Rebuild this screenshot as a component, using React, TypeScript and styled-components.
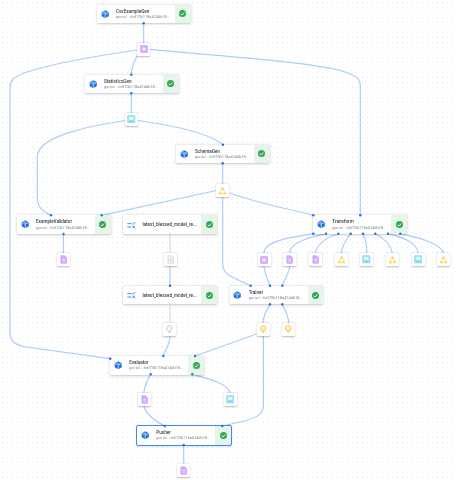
import styled, { createGlobalStyle } from 'styled-components';

const GlobalStyle = createGlobalStyle`
	html, body {
		margin: 0;
		padding: 0;
		background: #fff;
		font-family: Roboto, "Liberation Sans", sans-serif;
	}
`;

const DIGEST = 'gcr.io/...fcff70b118a414db18...';

type NodeData = { name: string; x: number; y: number; sub?: boolean; kind?: 'exec' | 'resolver'; selected?: boolean };

const NODES: NodeData[] = [
	{ name: 'CsvExampleGen', x: 97, y: 4.7, sub: true },
	{ name: 'StatisticsGen', x: 85, y: 74.7, sub: true },
	{ name: 'SchemaGen', x: 176, y: 144.7, sub: true },
	{ name: 'ExampleValidator', x: 17, y: 215.3, sub: true },
	{ name: 'latest_blessed_model_re...', x: 123.4, y: 215.3, kind: 'resolver' },
	{ name: 'Transform', x: 313.3, y: 215.3, sub: true },
	{ name: 'latest_blessed_model_re...', x: 123.4, y: 285.8, kind: 'resolver' },
	{ name: 'Trainer', x: 229.7, y: 285.8, sub: true },
	{ name: 'Evaluator', x: 110.3, y: 356, sub: true },
	{ name: 'Pusher', x: 137.3, y: 426, sub: true, selected: true },
];

type ArtifactKind = 'examples' | 'stats' | 'schema' | 'file' | 'blank' | 'bulb' | 'bulbGrey';

const ARTIFACTS: { kind: ArtifactKind; x: number; y: number }[] = [
	{ kind: 'examples', x: 143.7, y: 49 },
	{ kind: 'stats', x: 131.3, y: 119 },
	{ kind: 'schema', x: 222.7, y: 190 },
	{ kind: 'file', x: 63.5, y: 259.5 },
	{ kind: 'blank', x: 170, y: 259.5 },
	{ kind: 'examples', x: 264, y: 259.5 },
	{ kind: 'file', x: 289.7, y: 259.5 },
	{ kind: 'file', x: 315.3, y: 259.5 },
	{ kind: 'schema', x: 341, y: 259.5 },
	{ kind: 'stats', x: 366.7, y: 259.5 },
	{ kind: 'schema', x: 392.3, y: 259.5 },
	{ kind: 'stats', x: 418, y: 259.5 },
	{ kind: 'schema', x: 443.7, y: 259.5 },
	{ kind: 'bulbGrey', x: 169.7, y: 329.7 },
	{ kind: 'bulb', x: 263, y: 329.7 },
	{ kind: 'bulb', x: 288.7, y: 329.7 },
	{ kind: 'file', x: 144, y: 399.5 },
	{ kind: 'stats', x: 230, y: 399.5 },
	{ kind: 'file', x: 183.7, y: 470 },
];

const EDGES = [
	'M143.7 23 V43',
	'M138 54 C135 60 131.3 66 131.3 74.7',
	'M138 50 C100 55 50 64 24 73 C14 77 10 80 10 88 V332 C10 342 16 345 26 347 L110.3 358.7',
	'M150 49.3 C230 57 330 63 350 74 C358 77 360.3 80 360.3 86 V215.3',
	'M131.3 93.3 V113',
	'M125 120.5 C90 126 37.3 136 37.3 157 V198 C37.3 208 44 212 51 215.3',
	'M138 120.5 C170 125 210 133 223 145',
	'M222.7 163.3 V184',
	'M216.5 190.5 L101.7 215.3',
	'M229.7 193 C260 204 285 208 313.3 215.3',
	'M222.7 196 V262 C222.7 271 226 274 232 277 L250.7 285.8',
	'M63.5 234 V253',
	'M170 266 V285.8',
	'M313.3 233.7 C285 238 264 242 264 253',
	'M326 233.7 C305 238 289.7 244 289.7 253',
	'M338.3 233.7 C325 238 317 245 315.3 253',
	'M350.7 233.7 C346 239 343 245 341 253',
	'M363 233.7 C366 239 366.7 245 366.7 253',
	'M375.3 233.7 C384 238 391 245 392.3 253',
	'M388 233.7 C405 238 417 243 418 253',
	'M400.3 233.7 C420 238 440 243 443.7 253',
	'M264 266 C264.5 274 268 280 270 285.8',
	'M289.7 266 C289 274 284 280 282.3 285.8',
	'M270 304.3 C266 310 263.5 316 263 323',
	'M282.3 304.3 C285 310 288.5 316 288.7 323',
	'M256.7 334 L195 356',
	'M263.4 336 V405 C263.4 414 258 417 245 421 L222.3 426',
	'M170 336 C170 345 165 350 163.3 356',
	'M150.7 374.3 C147 381 144 386 144 393',
	'M192.3 374.3 C210 379 228 384 230 393',
	'M144 406 C146 415 155 421 164.7 426',
	'M183.7 445 V463.5',
];

const GREY_EDGES = ['M170 234 V253', 'M170 304.3 V323'];

const PORTS: [number, number][] = [
	[143.7, 23.2], [131.3, 74.7], [131.3, 93.3], [223, 144.8], [222.7, 163.3],
	[51, 215.3], [101.7, 215.3], [63.5, 234], [170, 285.8], [313.3, 215.3], [360.3, 215.3],
	[313.3, 233.7], [326, 233.7], [338.3, 233.7], [350.7, 233.7], [363, 233.7], [375.3, 233.7], [388, 233.7], [400.3, 233.7],
	[250.7, 285.8], [270, 285.8], [282.3, 285.8], [270, 304.3], [282.3, 304.3],
	[110.3, 358.7], [163.3, 356], [195, 356], [150.7, 374.3], [192.3, 374.3],
	[164.7, 426], [222.3, 426], [183.7, 445],
];

const GREY_PORTS: [number, number][] = [[170, 234], [170, 304.3]];

function ExecutorIcon() {
	return (
		<svg width="8.5" height="8.5" viewBox="0 0 24 24">
			<path d="M12 1 L22 6.5 V17.5 L12 23 L2 17.5 V6.5 Z" fill="#1a73e8" />
			<path d="M3 7 L12 12 L21 7 M12 12 V23 M7.5 4.5 L16.5 9.5" stroke="#fff" strokeWidth="1.8" fill="none" />
		</svg>
	);
}

function ResolverIcon() {
	return (
		<svg width="9" height="8" viewBox="0 0 27 24" fill="none" stroke="#1a73e8" strokeWidth="2.4">
			<path d="M1 8 H13 M1 18 H13" />
			<path d="M15 7 L18.5 10.5 L25 3" />
			<path d="M16 14 L24 22 M24 14 L16 22" />
		</svg>
	);
}

function CheckIcon() {
	return (
		<svg width="7" height="7" viewBox="0 0 24 24">
			<circle cx="12" cy="12" r="12" fill="#34a853" />
			<path d="M6 12.5 L10.5 17 L18.5 8.5" stroke="#fff" strokeWidth="3" fill="none" />
		</svg>
	);
}

function ArtifactIcon({ kind }: { kind: ArtifactKind }) {
	switch (kind) {
		case 'examples':
			return (
				<svg width="8" height="8" viewBox="0 0 24 24">
					<rect x="1.5" y="1.5" width="21" height="21" rx="2" fill="#d7aefb" stroke="#c58af9" strokeWidth="1.5" />
					<circle cx="12" cy="12" r="5.5" fill="#f3e8fd" />
				</svg>
			);
		case 'stats':
			return (
				<svg width="8.5" height="8.5" viewBox="0 0 24 24">
					<rect x="1.5" y="1.5" width="21" height="21" rx="2" fill="#a1e4f2" stroke="#78d9ec" strokeWidth="1.5" />
					<rect x="6" y="6" width="12" height="8" fill="#e4f7fb" />
					<path d="M6 18 H18" stroke="#4ecde6" strokeWidth="2" />
				</svg>
			);
		case 'schema':
			return (
				<svg width="9" height="9" viewBox="0 0 24 24" fill="#fdd663">
					<path d="M12 1.5 L17.5 11.5 H6.5 Z" />
					<path d="M6.5 12.5 L12 22 H1 Z" />
					<path d="M17.5 12.5 L23 22 H12 Z" />
				</svg>
			);
		case 'file':
			return (
				<svg width="9" height="9" viewBox="0 0 24 24">
					<path d="M5 2 H15 L20 7 V22 H5 Z" fill="#d7aefb" stroke="#c58af9" strokeWidth="1.5" />
					<path d="M9 12 H16 M9 16.5 H16" stroke="#f3e8fd" strokeWidth="2" />
				</svg>
			);
		case 'blank':
			return (
				<svg width="9" height="9" viewBox="0 0 24 24">
					<path d="M5 2 H15 L20 7 V22 H5 Z" fill="#f1f3f4" stroke="#c4c7ca" strokeWidth="1.5" />
					<path d="M9 12 H16 M9 16.5 H16" stroke="#c4c7ca" strokeWidth="1.6" />
				</svg>
			);
		default: {
			const fill = kind === 'bulb' ? '#fef1c4' : '#f8f9fa';
			const line = kind === 'bulb' ? '#fbbc04' : '#bdc1c6';
			return (
				<svg width="8.5" height="8.5" viewBox="0 0 24 24">
					<path d="M12 2 C7 2 4.5 5.5 4.5 9 C4.5 13 8 15 9 18 H15 C16 15 19.5 13 19.5 9 C19.5 5.5 17 2 12 2 Z" fill={fill} stroke={line} strokeWidth="2.4" />
					<path d="M10 21.5 H14" stroke={line} strokeWidth="2" />
				</svg>
			);
		}
	}
}

export default function App() {
	return (
		<Canvas>
			<GlobalStyle />
			<EdgeLayer viewBox="0 0 456 480">
				{EDGES.map((d, i) => (
					<path key={i} d={d} stroke="#aecbfa" />
				))}
				{GREY_EDGES.map((d, i) => (
					<path key={i} d={d} stroke="#d9dbde" />
				))}
			</EdgeLayer>
			{ARTIFACTS.map((a, i) => (
				<ArtifactBox key={i} $x={a.x} $y={a.y}>
					<ArtifactIcon kind={a.kind} />
				</ArtifactBox>
			))}
			{NODES.map((n, i) => (
				<NodeCard key={i} $x={n.x} $y={n.y} $selected={n.selected}>
					<IconSlot>{n.kind === 'resolver' ? <ResolverIcon /> : <ExecutorIcon />}</IconSlot>
					<Labels>
						<NodeName>{n.name}</NodeName>
						{n.sub && <NodeDigest>{DIGEST}</NodeDigest>}
					</Labels>
					<StatusCell>
						<CheckIcon />
					</StatusCell>
				</NodeCard>
			))}
			<PortLayer viewBox="0 0 456 480">
				{PORTS.map(([cx, cy], i) => (
					<circle key={i} cx={cx} cy={cy} r="1.2" fill="#1a73e8" />
				))}
				{GREY_PORTS.map(([cx, cy], i) => (
					<circle key={i} cx={cx} cy={cy} r="1.2" fill="#d9dbde" />
				))}
			</PortLayer>
		</Canvas>
	);
}

const Canvas = styled.div`
	position: relative;
	width: 456px;
	height: 480px;
	overflow: hidden;
	background-color: #fff;
	background-image: radial-gradient(circle at 2.5px 2.5px, #e8eaed 0.5px, transparent 1px);
	background-size: 5px 5px;
	filter: blur(0.25px);
`;

const EdgeLayer = styled.svg`
	position: absolute;
	inset: 0;
	width: 456px;
	height: 480px;
	fill: none;
	stroke-width: 1.2;
`;

const PortLayer = styled(EdgeLayer)`
	pointer-events: none;
`;

const NodeCard = styled.div<{ $x: number; $y: number; $selected?: boolean }>`
	position: absolute;
	left: ${p => p.$x}px;
	top: ${p => p.$y}px;
	width: 93.5px;
	height: 18.6px;
	box-sizing: border-box;
	display: flex;
	align-items: stretch;
	background: #fff;
	border-radius: 1px;
	box-shadow: 0 0.5px 2.5px rgba(60, 64, 67, 0.3);
	${p => p.$selected && 'outline: 1px solid #4285f4; box-shadow: 0 0.5px 2.5px rgba(26, 115, 232, 0.4);'}
`;

const IconSlot = styled.div`
	flex: 0 0 16px;
	display: flex;
	align-items: center;
	justify-content: center;
`;

const Labels = styled.div`
	flex: 1;
	min-width: 0;
	display: flex;
	flex-direction: column;
	justify-content: center;
	padding-left: 3px;
	gap: 1.2px;
	white-space: nowrap;
	overflow: hidden;
`;

const NodeName = styled.div`
	font-size: 4.6px;
	line-height: 5px;
	font-weight: 500;
	color: #3c4043;
`;

const NodeDigest = styled.div`
	font-size: 3.9px;
	line-height: 4.2px;
	color: #80868b;
`;

const StatusCell = styled.div`
	flex: 0 0 15.5px;
	display: flex;
	align-items: center;
	justify-content: center;
	background: #e6f4ea;
`;

const ArtifactBox = styled.div<{ $x: number; $y: number }>`
	position: absolute;
	left: ${p => p.$x - 6.5}px;
	top: ${p => p.$y - 6.5}px;
	width: 13px;
	height: 13px;
	display: flex;
	align-items: center;
	justify-content: center;
	background: #fff;
	border-radius: 1px;
	box-shadow: 0 0.3px 1.8px rgba(60, 64, 67, 0.35);
`;
